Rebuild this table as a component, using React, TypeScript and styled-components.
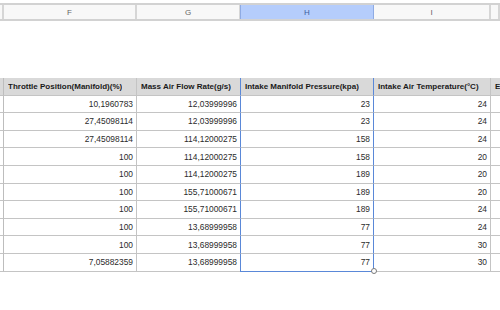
import React from 'react';
import styled, { createGlobalStyle } from 'styled-components';

const GlobalStyle = createGlobalStyle`
    html, body {
        margin: 0;
        padding: 0;
        background: #ffffff;
    }

    body {
        font-family: "Liberation Sans", Arial, sans-serif;
        width: 500px;
        height: 310px;
        overflow: hidden;
    }
`;

const COLUMNS = '4px 133px 104px 133px 117px 1fr';

const Sheet = styled.div`
    width: 500px;
    height: 310px;
    display: flex;
    flex-direction: column;
    padding-top: 3px;
    box-sizing: border-box;
`;

const LetterBar = styled.div`
    display: grid;
    grid-template-columns: ${COLUMNS};
    height: 18px;
    box-sizing: border-box;
    border-top: 2px solid #d2d2d2;
    border-bottom: 2px solid #d2d2d2;
    background: #f8f8f8;
`;

const Letter = styled.div<{ $selected?: boolean }>`
    display: flex;
    align-items: center;
    justify-content: center;
    box-sizing: border-box;
    border-right: 2px solid #d6d6d6;
    font-size: 8px;
    color: ${p => (p.$selected ? '#3d5e9e' : '#666666')};
    background: ${p => (p.$selected ? '#b5cdfc' : 'transparent')};
    ${p => p.$selected && 'border-left: 1px solid #8fabe3; border-right: 1px solid #8fabe3; margin-left: -1px;'}
`;

const Table = styled.div`
    margin-top: 57px;
    display: grid;
    grid-template-columns: ${COLUMNS};
    grid-auto-rows: 17.6px;
`;

const Cell = styled.div<{ $head?: boolean; $selected?: boolean; $last?: boolean; $left?: boolean }>`
    position: relative;
    display: flex;
    align-items: center;
    justify-content: ${p => (p.$left ? 'flex-start' : 'flex-end')};
    box-sizing: border-box;
    padding: 0 3px 0 4px;
    white-space: nowrap;
    overflow: visible;
    font-size: ${p => (p.$head ? '8px' : '8.4px')};
    font-weight: ${p => (p.$head ? 700 : 400)};
    color: ${p => (p.$head ? '#1a1a1a' : '#2b2b2b')};
    background: ${p => (p.$head ? '#d9d9d9' : '#ffffff')};
    border-right: 1px solid #c4c4c4;
    border-bottom: 1px solid #c4c4c4;
    ${p => p.$selected && `
        border-left: 1px solid #5a88d8;
        border-right: 1px solid #5a88d8;
        margin-left: -1px;
    `}
    ${p => p.$selected && p.$last && 'border-bottom: 1px solid #5a88d8;'}
`;

const Stub = styled.div<{ $head?: boolean }>`
    box-sizing: border-box;
    background: ${p => (p.$head ? '#d9d9d9' : '#ffffff')};
    border-right: 1px solid #bdbdbd;
    border-bottom: 1px solid #c4c4c4;
`;

const Clip = styled.span`
    overflow: hidden;
`;

const Handle = styled.span`
    position: absolute;
    right: -3.5px;
    bottom: -3.5px;
    width: 4px;
    height: 4px;
    border-radius: 50%;
    border: 1px solid #7a7a7a;
    background: #ffffff;
    z-index: 2;
`;

const headers = [
    'Throttle Position(Manifold)(%)',
    'Mass Air Flow Rate(g/s)',
    'Intake Manifold Pressure(kpa)',
    'Intake Air Temperature(°C)',
    'E',
];

const rows: string[][] = [
    ['10,1960783', '12,03999996', '23', '24'],
    ['27,45098114', '12,03999996', '23', '24'],
    ['27,45098114', '114,12000275', '158', '24'],
    ['100', '114,12000275', '158', '20'],
    ['100', '114,12000275', '189', '20'],
    ['100', '155,71000671', '189', '20'],
    ['100', '155,71000671', '189', '24'],
    ['100', '13,68999958', '77', '24'],
    ['100', '13,68999958', '77', '30'],
    ['7,05882359', '13,68999958', '77', '30'],
];

export default function App() {
    return (
        <>
            <GlobalStyle />
            <Sheet>
                <LetterBar>
                    <Letter />
                    <Letter>F</Letter>
                    <Letter>G</Letter>
                    <Letter $selected>H</Letter>
                    <Letter>I</Letter>
                    <Letter />
                </LetterBar>

                <Table>
                    <Stub $head />
                    {headers.map((h, i) => (
                        <Cell key={h} $head $left $selected={i === 2}>
                            <Clip>{h}</Clip>
                        </Cell>
                    ))}

                    {rows.map((r, ri) => (
                        <React.Fragment key={ri}>
                            <Stub />
                            {r.map((v, ci) => (
                                <Cell key={ci} $selected={ci === 2} $last={ri === rows.length - 1}>
                                    {v}
                                    {ci === 2 && ri === rows.length - 1 && <Handle />}
                                </Cell>
                            ))}
                            <Cell />
                        </React.Fragment>
                    ))}
                </Table>
            </Sheet>
        </>
    );
}
